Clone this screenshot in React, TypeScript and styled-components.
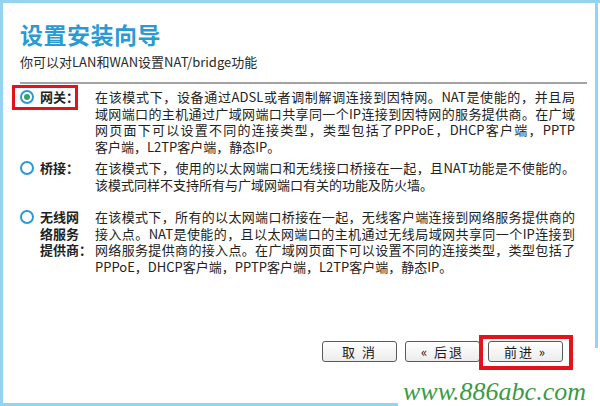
import React from "react";
import styled, { createGlobalStyle } from "styled-components";

const Global = createGlobalStyle`
  html, body { margin: 0; padding: 0; background: #fff; }
  body { font-family: "Noto Sans CJK SC", "Noto Sans", sans-serif; }
`;

const Frame = styled.div`
  position: relative;
  width: 600px;
  height: 406px;
  box-sizing: border-box;
  border-left: 3px solid #93d5f1;
  border-top: 3px solid #93d5f1;
  padding: 16px 0 0 17px;
  overflow: hidden;
  display: flex;
  flex-direction: column;
  &::before {
    content: "";
    position: absolute;
    left: -3px;
    bottom: 0;
    width: 398px;
    height: 3px;
    background: #93d5f1;
  }
  &::after {
    content: "";
    position: absolute;
    right: 2px;
    top: -3px;
    width: 3px;
    height: 348px;
    background: #93d5f1;
  }
`;

const Title = styled.h1`
  margin: 0;
  font-size: 23px;
  line-height: 30px;
  font-weight: 700;
  color: #2a9bd2;
  letter-spacing: 0.5px;
`;

const Subtitle = styled.p`
  margin: 4px 0 0;
  font-size: 13px;
  line-height: 18px;
  color: #2a2a2a;
`;

const Divider = styled.hr`
  margin: 11px 0 0;
  width: 567px;
  height: 2px;
  border: 0;
  background: #a3a3a3;
`;

const Options = styled.div`
  display: flex;
  flex-direction: column;
  margin-left: -8px;
`;

const OptionRow = styled.div<{ $top: number }>`
  display: flex;
  align-items: flex-start;
  margin-top: ${(p) => p.$top}px;
`;

const Selector = styled.div<{ $marked?: boolean }>`
  width: 66px;
  box-sizing: border-box;
  border: 3px solid ${(p) => (p.$marked ? "#e3121d" : "transparent")};
  padding: 1px 0 1px 5px;
  display: flex;
  align-items: flex-start;
  gap: 6px;
`;

const Radio = styled.span<{ $checked?: boolean }>`
  flex: none;
  width: 14px;
  height: 14px;
  margin-top: 1px;
  box-sizing: border-box;
  border: 2px solid #2b9ad3;
  border-radius: 50%;
  display: flex;
  align-items: center;
  justify-content: center;
  &::after {
    content: "";
    width: 6px;
    height: 6px;
    border-radius: 50%;
    background: ${(p) => (p.$checked ? "#33a36b" : "transparent")};
  }
`;

const Label = styled.div`
  font-size: 13px;
  line-height: 16.5px;
  font-weight: 700;
  color: #222;
  white-space: nowrap;
`;

const Description = styled.div`
  margin-left: 17px;
  margin-top: 4px;
  width: 480px;
  font-size: 13px;
  line-height: 16.5px;
  color: #222;
`;

const Line = styled.div<{ $full?: boolean }>`
  text-align: justify;
  text-align-last: ${(p) => (p.$full ? "justify" : "left")};
  white-space: nowrap;
`;

const ButtonBar = styled.div`
  margin: auto 0 36px 302px;
  display: flex;
  align-items: flex-start;
  gap: 8px;
`;

const Button = styled.button`
  display: block;
  width: 75px;
  height: 21px;
  box-sizing: border-box;
  border: 1px solid #5a5a5a;
  border-radius: 3px;
  background: linear-gradient(#ffffff, #ececec);
  font-family: "Noto Sans CJK SC", sans-serif;
  font-size: 13px;
  line-height: 17px;
  color: #1a1a1a;
  letter-spacing: 2px;
  padding: 0;
`;

const Highlight = styled.div`
  display: flex;
  border: 4px solid #e3121d;
  padding: 2px 6px 4px 5px;
  margin: -6px 0 0 -9px;
`;

const Watermark = styled.div`
  position: absolute;
  left: 400px;
  top: 374px;
  font-family: "Liberation Serif", "DejaVu Serif", serif;
  font-style: italic;
  font-size: 26px;
  line-height: 30px;
  color: #3b9b45;
  white-space: nowrap;
`;

type Opt = { label: string[]; lines: string[]; checked?: boolean; top: number };

const options: Opt[] = [
  {
    label: ["网关："],
    checked: true,
    top: 1,
    lines: [
      "在该模式下，设备通过ADSL或者调制解调连接到因特网。NAT是使能的，并且局",
      "域网端口的主机通过广域网端口共享同一个IP连接到因特网的服务提供商。在广域",
      "网页面下可以设置不同的连接类型，类型包括了PPPoE，DHCP客户端，PPTP",
      "客户端，L2TP客户端，静态IP。",
    ],
  },
  {
    label: ["桥接："],
    top: 1,
    lines: [
      "在该模式下，使用的以太网端口和无线接口桥接在一起，且NAT功能是不使能的。",
      "该模式同样不支持所有与广域网端口有关的功能及防火墙。",
    ],
  },
  {
    label: ["无线网", "络服务", "提供商："],
    top: 12,
    lines: [
      "在该模式下，所有的以太网端口桥接在一起，无线客户端连接到网络服务提供商的",
      "接入点。NAT是使能的，且以太网端口的主机通过无线局域网共享同一个IP连接到",
      "网络服务提供商的接入点。在广域网页面下可以设置不同的连接类型，类型包括了",
      "PPPoE，DHCP客户端，PPTP客户端，L2TP客户端，静态IP。",
    ],
  },
];

export default function App() {
  return (
    <>
      <Global />
      <Frame>
        <Title>设置安装向导</Title>
        <Subtitle>你可以对LAN和WAN设置NAT/bridge功能</Subtitle>
        <Divider />
        <Options>
          {options.map((o, i) => (
            <OptionRow key={i} $top={o.top}>
              <Selector $marked={o.checked}>
                <Radio $checked={o.checked} />
                <Label>
                  {o.label.map((l) => (
                    <div key={l}>{l}</div>
                  ))}
                </Label>
              </Selector>
              <Description>
                {o.lines.map((l, j) => (
                  <Line key={j} $full={j < o.lines.length - 1}>
                    {l}
                  </Line>
                ))}
              </Description>
            </OptionRow>
          ))}
        </Options>
        <ButtonBar>
          <Button>取 消</Button>
          <Button>« 后退</Button>
          <Highlight>
            <Button>前进 »</Button>
          </Highlight>
        </ButtonBar>
        <Watermark>www.886abc.com</Watermark>
      </Frame>
    </>
  );
}
